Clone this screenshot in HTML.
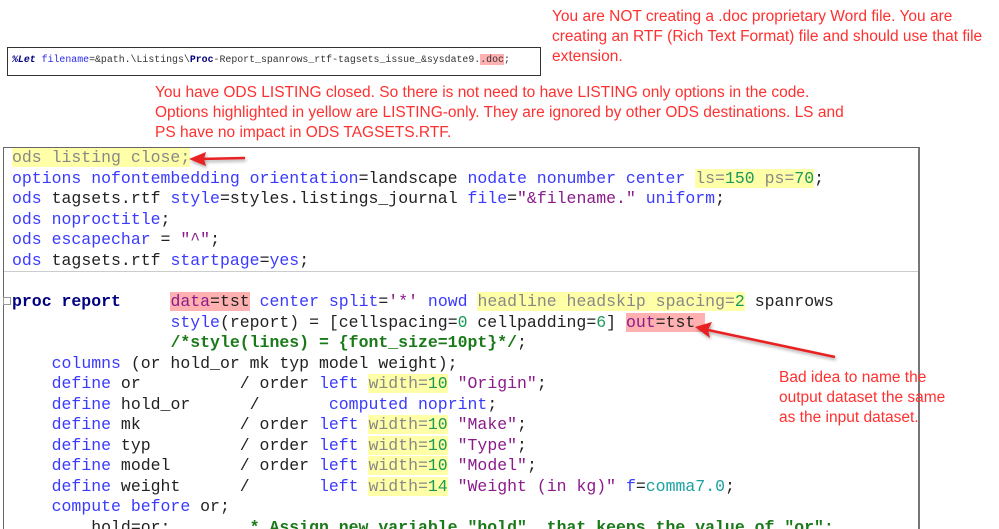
<!DOCTYPE html>
<html style="overflow:hidden;height:529px"><head><meta charset="utf-8"><style>
html,body{margin:0;width:999px;height:529px;overflow:hidden}
body{background:#fff;position:relative;font-family:"Liberation Sans",Arial,sans-serif}
.n{position:absolute;color:#ff3030;font-size:15.5px;line-height:20px;white-space:nowrap}
.fb{position:absolute;left:7px;top:47px;width:534px;height:29px;border:1px solid #333;box-sizing:border-box}
.ft{position:absolute;left:12px;top:53px;font:9.9px/14px "Liberation Mono",monospace;white-space:pre;color:#333}
.cb{position:absolute;left:3px;top:147px;width:917px;height:382px;border:1px solid #666;border-right:2px solid #777;border-bottom:none;box-sizing:border-box}
.sep{position:absolute;left:4px;top:271px;width:914px;height:1px;background:#ccc}
.l{position:absolute;left:12px;font:16.5px/20.5px "Liberation Mono","Courier New",monospace;white-space:pre;color:#222}
.k{color:#3a3aff}.s{color:#8b1a8b}.g{color:#1a9a5a}.c{color:#1a7a1a;font-weight:bold}.b{color:#000080;font-weight:bold}.gr{color:#888}
.y{background:#ffffa8}.r{background:#ffb0b0}
</style></head><body>
<div class="n" style="left:552px;top:7px">You are NOT creating a .doc proprietary Word file. You are<br>creating an RTF (Rich Text Format) file and should use that file<br>extension.</div>
<div class="fb"></div>
<div class="ft"><b style="color:#000080;font-style:italic">%Let</b> <span style="color:#2a2aee">filename</span>=&amp;path.\Listings\<b style="color:#000080">Proc</b>-Report_spanrows_rtf-tagsets_issue_&amp;sysdate9.<span style="background:#ffb0b0">.doc</span>;</div>
<div class="n" style="left:155px;top:83px">You have ODS LISTING closed. So there is not need to have LISTING only options in the code.<br>Options highlighted in yellow are LISTING-only. They are ignored by other ODS destinations. LS and<br>PS have no impact in ODS TAGSETS.RTF.</div>
<div class="cb"></div><div class="sep"></div>
<div class="l" style="top:148px"><span class="y gr">ods listing close;</span></div>
<div class="l" style="top:168.5px"><span class="k">options nofontembedding orientation</span>=landscape <span class="k">nodate nonumber center</span> <span class="y"><span class="gr">ls=</span><span class="g">150</span> <span class="gr">ps=</span><span class="g">70</span></span>;</div>
<div class="l" style="top:189px"><span class="k">ods</span> tagsets.rtf <span class="k">style</span>=styles.listings_journal <span class="k">file</span>=<span class="s">"&amp;filename."</span> <span class="k">uniform</span>;</div>
<div class="l" style="top:209.5px"><span class="k">ods noproctitle</span>;</div>
<div class="l" style="top:230px"><span class="k">ods escapechar</span> = <span class="s">"^"</span>;</div>
<div class="l" style="top:250.5px"><span class="k">ods</span> tagsets.rtf <span class="k">startpage</span>=<span class="k">yes</span>;</div>
<div style="position:absolute;left:3px;top:297px;width:6px;height:6px;border:1px solid #999;font-size:0"></div>
<div class="l" style="top:292px"><span class="b">proc report</span>     <span class="r"><span class="s">data</span>=tst</span> <span class="k">center split</span>=<span class="s">'*'</span> <span class="k">nowd</span> <span class="y gr">headline headskip spacing=<span class="g">2</span></span> spanrows</div>
<div class="l" style="top:312.5px">                <span class="k">style</span>(report) = [cellspacing=<span class="g">0</span> cellpadding=<span class="g">6</span>] <span class="r"><span class="s">out</span>=tst </span></div>
<div class="l" style="top:333px">                <span class="c">/*style(lines) = {font_size=10pt}*/</span>;</div>
<div class="l" style="top:353.5px">    <span class="k">columns</span> (or hold_or mk typ model weight);</div>
<div class="l" style="top:374px">    <span class="k">define</span> or          / order <span class="k">left</span> <span class="y gr">width=<span class="g">10</span></span> <span class="s">"Origin"</span>;</div>
<div class="l" style="top:394.5px">    <span class="k">define</span> hold_or      /       <span class="k">computed noprint</span>;</div>
<div class="l" style="top:415px">    <span class="k">define</span> mk          / order <span class="k">left</span> <span class="y gr">width=<span class="g">10</span></span> <span class="s">"Make"</span>;</div>
<div class="l" style="top:435.5px">    <span class="k">define</span> typ         / order <span class="k">left</span> <span class="y gr">width=<span class="g">10</span></span> <span class="s">"Type"</span>;</div>
<div class="l" style="top:456px">    <span class="k">define</span> model       / order <span class="k">left</span> <span class="y gr">width=<span class="g">10</span></span> <span class="s">"Model"</span>;</div>
<div class="l" style="top:476.5px">    <span class="k">define</span> weight      /       <span class="k">left</span> <span class="y gr">width=<span class="g">14</span></span> <span class="s">"Weight (in kg)"</span> <span class="k">f</span>=<span style="color:#1aa0a0">comma7.0</span>;</div>
<div class="l" style="top:497px">    <span class="k">compute before</span> or;</div>
<div class="l" style="top:517.5px">        hold=or;        <span class="c">* Assign new variable "hold", that keeps the value of "or";</span></div>
<div class="n" style="left:779px;top:368px">Bad idea to name the<br>output dataset the same<br>as the input dataset.</div>
<svg style="position:absolute;left:0;top:0" width="999" height="529">
<defs><filter id="sh"><feDropShadow dx="1" dy="2" stdDeviation="1.5" flood-opacity="0.35"/></filter></defs>
<g filter="url(#sh)" fill="#e82020" stroke="#e82020">
<line x1="245" y1="158" x2="200" y2="159" stroke-width="2.5"/>
<polygon points="189,159 206,152 204,159 206,166" stroke="none"/>
<line x1="835" y1="357" x2="708" y2="330" stroke-width="2.5"/>
<polygon points="695,327 712,322 708,330 710,338" stroke="none"/>
</g></svg>
</body></html>
